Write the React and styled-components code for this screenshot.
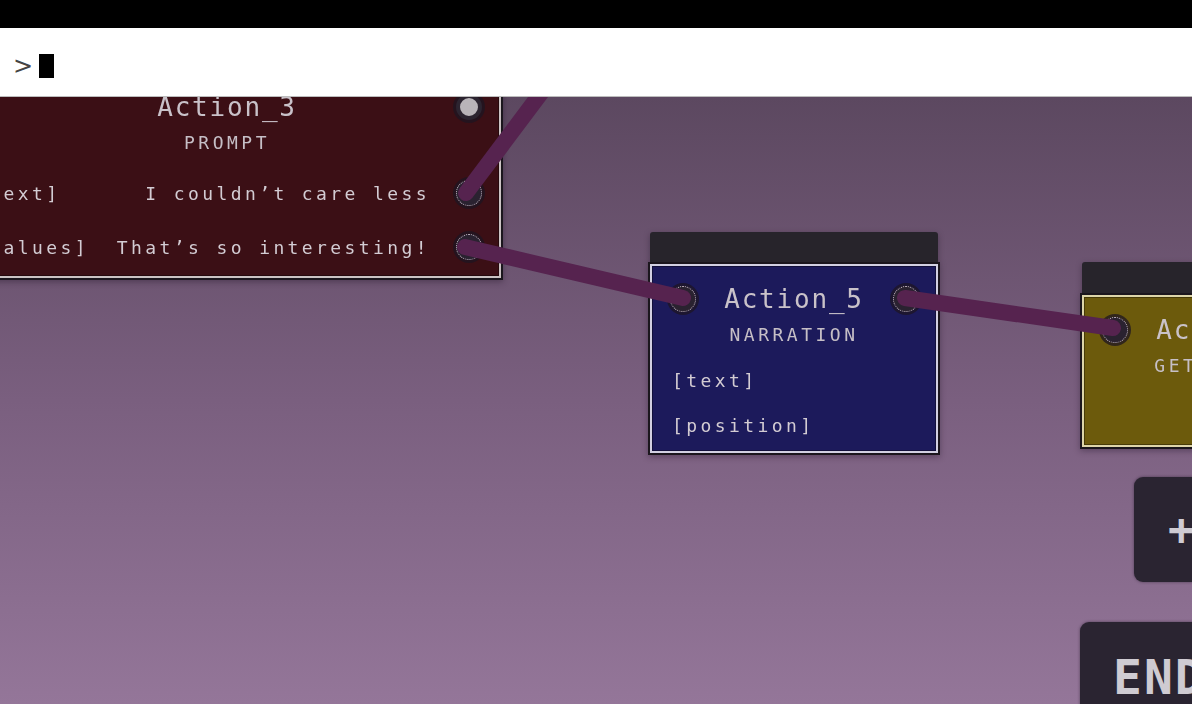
import React from 'react'
import styled, { createGlobalStyle } from 'styled-components'

const GlobalStyle = createGlobalStyle`
  html, body {
    margin: 0;
    padding: 0;
    width: 1192px;
    height: 704px;
    overflow: hidden;
    background: #000;
  }
  * { box-sizing: border-box; }
`

const Page = styled.div`
  display: flex;
  flex-direction: column;
  width: 1192px;
  height: 704px;
  font-family: "DejaVu Sans Mono", "Liberation Mono", monospace;
`

const TopBar = styled.div`
  height: 28px;
  background: #000;
  flex-shrink: 0;
`

const Console = styled.div`
  height: 69px;
  flex-shrink: 0;
  background: #fff;
  border-bottom: 1px solid #bdbdbd;
  display: flex;
  align-items: center;
  padding: 8px 0 0 13px;
  gap: 6px;
  position: relative;
  z-index: 2;
`

const Prompt = styled.span`
  font-family: "DejaVu Sans", sans-serif;
  font-size: 24px;
  color: #444;
  line-height: 1;
`

const Cursor = styled.span`
  display: block;
  width: 15px;
  height: 24px;
  background: #000;
`

const Canvas = styled.div`
  position: relative;
  flex: 1;
  overflow: hidden;
  background: linear-gradient(180deg, #5c4860 0%, #7a5f7f 50%, #947699 100%);
`

const NodeWrap = styled.div`
  position: absolute;
  display: flex;
  flex-direction: column;
  filter: drop-shadow(0 2px 3px rgba(20, 10, 25, 0.35));
`

const Header = styled.div`
  height: ${p => p.$h}px;
  background: #27242b;
  border-radius: 3px 3px 0 0;
`

const Body = styled.div`
  display: flex;
  flex-direction: column;
  min-height: ${p => p.$h}px;
  background: ${p => p.$bg};
  border: 2px solid ${p => p.$line};
  box-shadow: 0 0 0 2px #1b161d, inset 0 0 0 1px rgba(0, 0, 0, 0.35);
  color: #cdc6cd;
`

const TitleRow = styled.div`
  position: relative;
  height: 30px;
  margin-top: 18px;
  display: flex;
  align-items: center;
  justify-content: center;
  font-size: 26px;
  letter-spacing: 1.8px;
  color: #c9c2c9;
`

const Subtitle = styled.div`
  height: 22px;
  margin-top: 9px;
  display: flex;
  align-items: center;
  justify-content: center;
  font-size: 18px;
  letter-spacing: 3.5px;
  color: #c6bfc6;
`

const Rows = styled.div`
  display: flex;
  flex-direction: column;
  margin-top: 13px;
`

const Row = styled.div`
  position: relative;
  height: ${p => p.$h}px;
  display: flex;
  align-items: center;
  justify-content: space-between;
  padding: 0 69px 0 20px;
  font-size: 18px;
  letter-spacing: 3.4px;
  color: #d3ccd3;
  white-space: nowrap;
`

const Port = styled.span`
  position: absolute;
  top: 50%;
  ${p => (p.$side === 'left' ? 'left: 18px;' : 'right: 17px;')}
  width: 26px;
  height: 26px;
  margin-top: -13px;
  border-radius: 50%;
  background: ${p => (p.$exec ? '#b9b4b9' : '#2a2230')};
  border: ${p => (p.$exec ? '4px solid #2c2430' : '1px dotted #c9bcc9')};
  box-shadow: 0 0 0 3px rgba(30, 22, 34, 0.75);
`

const ActionButton = styled.div`
  position: absolute;
  left: ${p => p.$x}px;
  top: ${p => p.$y}px;
  width: ${p => p.$w}px;
  height: ${p => p.$h}px;
  background: #2a2431;
  border-radius: 9px;
  box-shadow: 0 0 3px rgba(20, 12, 24, 0.5);
  display: flex;
  align-items: center;
  padding-left: ${p => p.$pad}px;
  color: #cfcbd2;
  font-weight: bold;
  font-size: ${p => p.$size}px;
  letter-spacing: 2px;
`

const WireLayer = styled.svg`
  position: absolute;
  left: 0;
  top: 0;
  width: 100%;
  height: 100%;
  pointer-events: none;
`

const nodes = [
  {
    id: 'a3', x: -47, y: -57, w: 548, header: 32, body: 206, bg: '#3b0f15', line: '#cbc3c3',
    title: 'Action_3', kind: 'PROMPT', titlePorts: { right: 'exec' }, rowH: 54,
    rows: [['[text]', 'I couldn’t care less'], ['[values]', 'That’s so interesting!']],
  },
  {
    id: 'a5', x: 650, y: 135, w: 288, header: 32, body: 189, bg: '#1c1a5b', line: '#d2d0e2',
    title: 'Action_5', kind: 'NARRATION', titlePorts: { left: 'data', right: 'data' }, rowH: 45,
    rows: [['[text]', ''], ['[position]', '']],
  },
  {
    id: 'a6', x: 1082, y: 165, w: 288, header: 33, body: 152, bg: '#6c5a0c', line: '#ddd5a8',
    title: 'Action_6', kind: 'GET_CHOICE', titlePorts: { left: 'data' }, rowH: 45,
    rows: [],
  },
]

const wires = [
  [466, 96, 610, -96],
  [465, 150, 683, 201],
  [905, 201, 1113, 231],
]

const Node = ({ node }) => (
  <NodeWrap style={{ left: node.x, top: node.y, width: node.w }}>
    <Header $h={node.header} />
    <Body $h={node.body} $bg={node.bg} $line={node.line}>
      <TitleRow>
        {node.titlePorts.left && <Port $side="left" $exec={node.titlePorts.left === 'exec'} />}
        {node.title}
        {node.titlePorts.right && <Port $side="right" $exec={node.titlePorts.right === 'exec'} />}
      </TitleRow>
      <Subtitle>{node.kind}</Subtitle>
      <Rows>
        {node.rows.map(([label, value]) => (
          <Row key={label} $h={node.rowH}>
            <span>{label}</span>
            <span>{value}</span>
            {value && <Port $side="right" />}
          </Row>
        ))}
      </Rows>
    </Body>
  </NodeWrap>
)

export default function App() {
  return (
    <Page>
      <GlobalStyle />
      <TopBar />
      <Console>
        <Prompt>&gt;</Prompt>
        <Cursor />
      </Console>
      <Canvas>
        {nodes.map(n => <Node key={n.id} node={n} />)}
        <WireLayer viewBox="0 0 1192 607">
          {wires.map(([x1, y1, x2, y2], i) => (
            <line key={i} x1={x1} y1={y1} x2={x2} y2={y2} stroke="#56234f" strokeWidth="16" strokeLinecap="round" />
          ))}
        </WireLayer>
        <ActionButton $x={1134} $y={380} $w={80} $h={105} $pad={34} $size={44}>+</ActionButton>
        <ActionButton $x={1080} $y={525} $w={150} $h={110} $pad={33} $size={48}>END</ActionButton>
      </Canvas>
    </Page>
  )
}
